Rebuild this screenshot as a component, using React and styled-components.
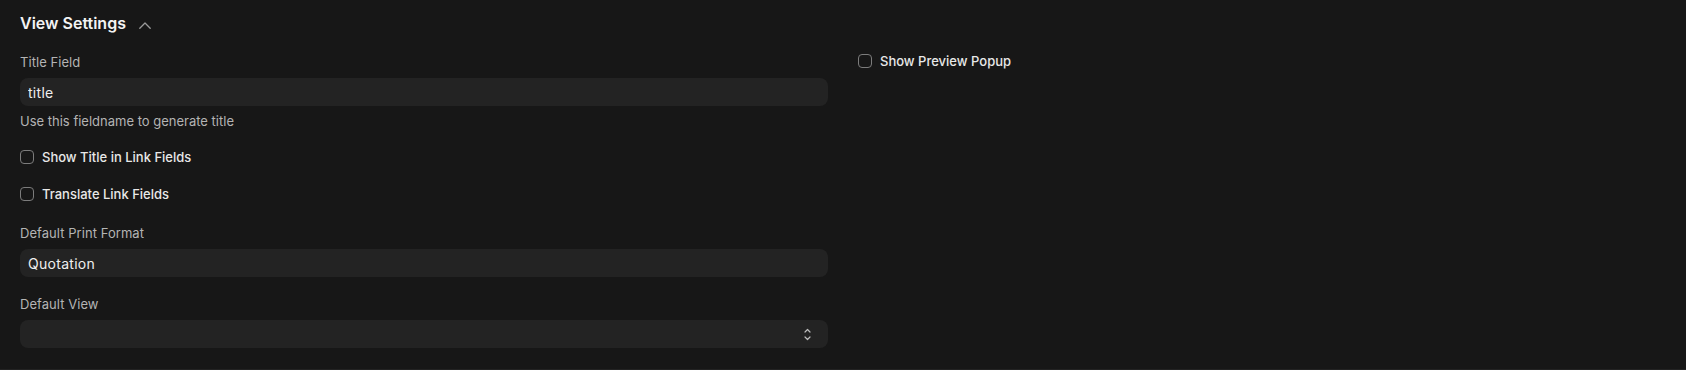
import React from "react";
import styled, { createGlobalStyle } from "styled-components";

const Global = createGlobalStyle`
  html, body { margin: 0; padding: 0; background: #171717; }
  body { font-family: Inter, "Noto Sans", sans-serif; -webkit-font-smoothing: antialiased; }
  * { box-sizing: border-box; }
`;

const Section = styled.section`
  background: #171717;
  padding: 12px 20px 21px;
  border-bottom: 1px solid #232323;
`;

const Head = styled.div`
  display: flex;
  align-items: center;
  height: 22px;
  margin-bottom: 20px;
`;

const Title = styled.h3`
  margin: 0;
  font-size: 16px;
  line-height: 22px;
  font-weight: 600;
  color: #f3f3f3;
`;

const Toggle = styled.svg`
  margin-left: 13px;
  margin-top: 4px;
  flex: none;
`;

const Grid = styled.div`
  display: grid;
  grid-template-columns: 1fr 1fr;
  column-gap: 30px;
  align-items: start;
`;

const Column = styled.div`
  display: flex;
  flex-direction: column;
`;

const Field = styled.div`
  display: flex;
  flex-direction: column;
  margin-top: ${(p) => p.$mt || 0}px;
`;

const Label = styled.label`
  font-size: 13px;
  line-height: 16px;
  letter-spacing: 0.004em;
  color: #b4b4b4;
  margin-bottom: 8px;
`;

const TextInput = styled.input`
  height: 28px;
  width: 100%;
  border: none;
  outline: none;
  border-radius: 8px;
  background: #232323;
  color: #efefef;
  font-family: Inter, "Noto Sans", sans-serif;
  font-size: 14px;
  letter-spacing: 0.02em;
  padding: 0 8px;
`;

const Description = styled.p`
  margin: 7px 0 0;
  font-size: 13px;
  line-height: 16px;
  color: #b4b4b4;
`;

const SelectBox = styled.div`
  height: 28px;
  display: flex;
  align-items: center;
  border-radius: 8px;
  background: #232323;
  padding: 0 17px 0 8px;
`;

const Select = styled.select`
  flex: 1;
  appearance: none;
  background: transparent;
  border: none;
  outline: none;
  color: #efefef;
  font-family: Inter, "Noto Sans", sans-serif;
  font-size: 14px;
  height: 100%;
`;

const CheckRow = styled.label`
  display: flex;
  align-items: center;
  gap: 8px;
  height: 16px;
  margin-top: ${(p) => p.$mt || 0}px;
  font-size: 13px;
  line-height: 16px;
  font-weight: 500;
  color: #e8e8e8;
`;

const Check = styled.input.attrs({ type: "checkbox" })`
  appearance: none;
  margin: 0;
  width: 14px;
  height: 14px;
  border: 1px solid #7c7c7c;
  border-radius: 4px;
  background: transparent;
  flex: none;
`;

const ChevronUp = () => (
  <Toggle width="12" height="7" viewBox="0 0 12 7" fill="none">
    <path d="M0.8 6.2 L6 1 L11.2 6.2" stroke="#9a9a9a" strokeWidth="1.3" strokeLinecap="round" strokeLinejoin="round" />
  </Toggle>
);

const SelectIcon = () => (
  <svg width="7" height="13" viewBox="0 0 7 13" fill="none">
    <path d="M1 4 L3.5 1.5 L6 4" stroke="#bdbdbd" strokeWidth="1.2" strokeLinecap="round" strokeLinejoin="round" />
    <path d="M1 9 L3.5 11.5 L6 9" stroke="#bdbdbd" strokeWidth="1.2" strokeLinecap="round" strokeLinejoin="round" />
  </svg>
);

export default function App() {
  return (
    <>
      <Global />
      <Section>
        <Head>
          <Title>View Settings</Title>
          <ChevronUp />
        </Head>
        <Grid>
          <Column>
            <Field>
              <Label>Title Field</Label>
              <TextInput defaultValue="title" />
              <Description>Use this fieldname to generate title</Description>
            </Field>
            <CheckRow $mt={20}>
              <Check />
              Show Title in Link Fields
            </CheckRow>
            <CheckRow $mt={21}>
              <Check />
              Translate Link Fields
            </CheckRow>
            <Field $mt={23}>
              <Label>Default Print Format</Label>
              <TextInput defaultValue="Quotation" />
            </Field>
            <Field $mt={19}>
              <Label>Default View</Label>
              <SelectBox>
                <Select defaultValue="">
                  <option value=""></option>
                  <option value="List">List</option>
                  <option value="Report">Report</option>
                </Select>
                <SelectIcon />
              </SelectBox>
            </Field>
          </Column>
          <Column>
            <CheckRow $mt={-1}>
              <Check />
              Show Preview Popup
            </CheckRow>
          </Column>
        </Grid>
      </Section>
    </>
  );
}
